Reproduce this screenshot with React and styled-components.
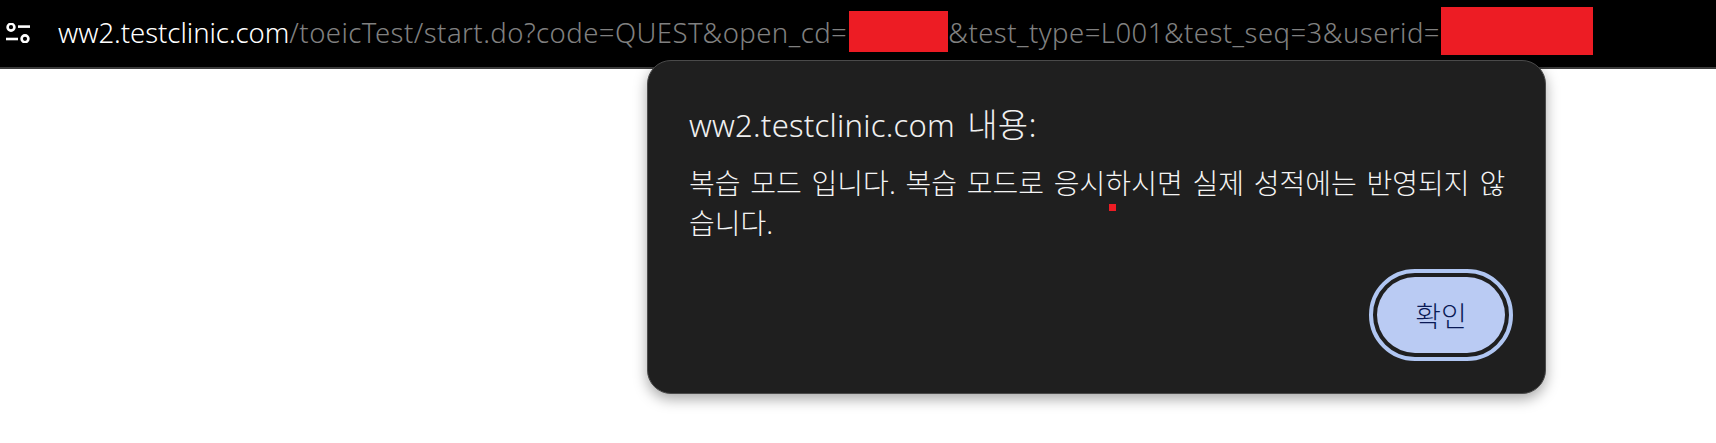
// Libraries
import React from "react";
import styled, { createGlobalStyle } from "styled-components";

const GlobalStyle = createGlobalStyle`
  html, body {
    margin: 0;
    padding: 0;
    background: #ffffff;
  }
  body {
    width: 1716px;
    height: 443px;
    overflow: hidden;
    font-family: "Noto Sans", "Noto Sans CJK KR", sans-serif;
  }
`;

// Browser address bar
const Page = styled.div`
  position: relative;
  width: 1716px;
  height: 443px;
  background: #ffffff;
`;
const AddressBar = styled.div`
  display: flex;
  align-items: center;
  box-sizing: border-box;
  height: 69px;
  padding: 0 0 5px 6px;
  background: #000000;
  border-bottom: 2px solid #3c3c3c;
  white-space: nowrap;
`;
const TuneIcon = styled.svg`
  flex: none;
  width: 24px;
  height: 20px;
  margin: 4px 28px 0 0;
`;
const Host = styled.span`
  margin-top: 2px;
  font-size: 27.5px;
  font-weight: 300;
  letter-spacing: -0.04px;
  color: #ffffff;
`;
const Path = styled.span`
  margin-top: 2px;
  font-size: 27.5px;
  font-weight: 300;
  letter-spacing: 0.45px;
  color: #808080;
`;
const Redaction = styled.span`
  flex: none;
  width: ${(props) => props.$width}px;
  height: ${(props) => props.$height}px;
  margin: ${(props) => props.$margin};
  background: #ed1c24;
`;

// JS alert dialog
const Dialog = styled.div`
  position: absolute;
  left: 647px;
  top: 60px;
  box-sizing: border-box;
  width: 899px;
  height: 334px;
  padding: 44px 40px 0 41px;
  background: #1f1f1f;
  border: 1px solid #4a4a4a;
  border-radius: 24px;
  box-shadow: 0 5px 14px rgba(0, 0, 0, 0.35);
`;
const Title = styled.div`
  font-size: 31px;
  font-weight: 300;
  line-height: 40px;
  letter-spacing: 0.24px;
  color: #f0f0f0;
`;
const TitleSuffix = styled.span`
  margin-left: 4px;
  font-size: 33px;
`;
const Message = styled.div`
  margin-top: 18px;
  font-size: 28px;
  font-weight: 300;
  line-height: 40px;
  word-spacing: 2.5px;
  white-space: nowrap;
  color: #f4f4f4;
`;
const Actions = styled.div`
  display: flex;
  justify-content: flex-end;
  margin-top: 34px;
`;
const OkButton = styled.button`
  box-sizing: border-box;
  width: 128px;
  height: 76px;
  padding: 0;
  border: none;
  border-radius: 38px;
  background: #bacbf3;
  outline: 4px solid #b0c6f2;
  outline-offset: 4px;
  color: #0a1a55;
  font-family: inherit;
  font-size: 28px;
  font-weight: 300;
`;
const RedDot = styled.span`
  position: absolute;
  left: 461px;
  top: 143px;
  width: 7px;
  height: 7px;
  background: #ed1c24;
`;

const App = () => {
  return (
    <Page>
      <GlobalStyle />
      <AddressBar>
        <TuneIcon viewBox="0 0 24 20" fill="none" stroke="#ffffff" strokeWidth="2.6">
          <circle cx="5" cy="4.2" r="3.4" />
          <path d="M12 3.6h12" />
          <path d="M0 16h12" />
          <circle cx="19" cy="15.8" r="3.4" />
        </TuneIcon>
        <Host>ww2.testclinic.com</Host>
        <Path>/toeicTest/start.do?code=QUEST&amp;open_cd=</Path>
        <Redaction $width={99} $height={41} $margin="0 0 0 2px" />
        <Path>&amp;test_type=L001&amp;test_seq=3&amp;userid=</Path>
        <Redaction $width={152} $height={48} $margin="0 0 0 1px" />
      </AddressBar>
      <Dialog>
        <Title>
          ww2.testclinic.com <TitleSuffix>내용:</TitleSuffix>
        </Title>
        <Message>
          복습 모드 입니다. 복습 모드로 응시하시면 실제 성적에는 반영되지 않
          <br />
          습니다.
        </Message>
        <Actions>
          <OkButton>확인</OkButton>
        </Actions>
        <RedDot />
      </Dialog>
    </Page>
  );
};

export default App;
